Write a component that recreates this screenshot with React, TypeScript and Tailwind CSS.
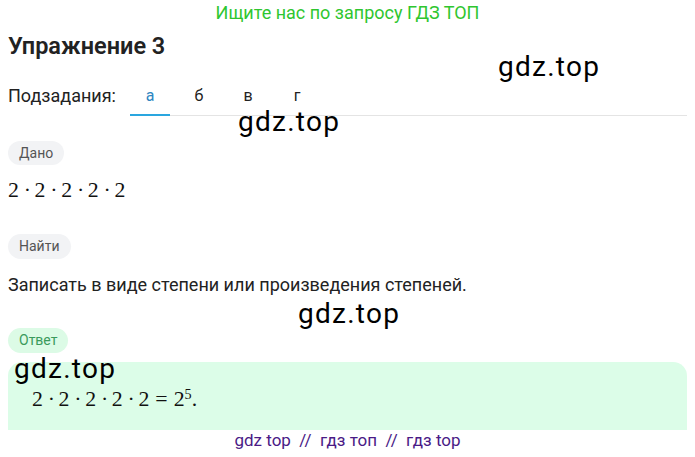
import React from "react";

const Dot = () => (
  <span className="inline-block w-[0.278em] mx-[0.222em] text-center">·</span>
);

const Two = () => <span className="inline-block w-[0.5em] text-center">2</span>;

function Product() {
  return (
    <>
      <Two />
      <Dot />
      <Two />
      <Dot />
      <Two />
      <Dot />
      <Two />
      <Dot />
      <Two />
    </>
  );
}

function Watermark({ className }: { className: string }) {
  return (
    <div
      className={`absolute text-[28px] leading-none text-black tracking-[0.045em] pointer-events-none ${className}`}
      style={{ fontFamily: "Roboto, sans-serif" }}
    >
      gdz.top
    </div>
  );
}

export default function App() {
  const tabs = ["а", "б", "в", "г"];
  return (
    <div
      className="relative w-[695px] h-[457px] overflow-hidden bg-white text-[#1f1f1f]"
      style={{ fontFamily: "Roboto, 'Noto Sans', sans-serif" }}
    >
      <div className="h-[24px] flex items-center justify-center text-[18px] text-[#2fc62f]">
        Ищите нас по запросу ГДЗ ТОП
      </div>

      <div className="px-2">
        <h1 className="mt-[7px] text-[23.5px] leading-[30px] font-semibold text-[#222]">
          Упражнение 3
        </h1>

        <div className="mt-[19px] flex items-end">
          <div className="w-[122px] text-[18px] leading-[24px] pb-[8px] text-[#222]">
            Подзадания:
          </div>
          <div className="flex-1 flex gap-[9px] border-b border-[#e4e4e4]">
            {tabs.map((t, i) => (
              <div
                key={t}
                className={`w-[40px] -mb-px text-center text-[16px] leading-[24px] pt-[4px] pb-[6px] border-b-2 ${
                  i === 0 ? "border-[#2aa6df] text-[#2e86c1]" : "border-transparent text-[#222]"
                }`}
              >
                {t}
              </div>
            ))}
          </div>
        </div>

        <div className="mt-[25px] inline-flex h-[24px] items-center rounded-full bg-[#f2f3f5] px-[11px] text-[14px] text-[#555]">
          Дано
        </div>

        <div
          className="mt-[11px] text-[21.8px] leading-[28px] text-[#111]"
          style={{ fontFamily: "'Liberation Serif', serif" }}
        >
          <Product />
        </div>

        <div className="mt-[30px] inline-flex h-[25px] items-center rounded-full bg-[#f2f3f5] px-[11px] text-[14px] text-[#555]">
          Найти
        </div>

        <p className="mt-[14px] text-[18px] leading-[24px] text-[#222]">
          Записать в виде степени или произведения степеней.
        </p>

        <div className="mt-[31px] inline-flex h-[25px] items-center rounded-full bg-[#dcfbe6] px-[11px] text-[14px] text-[#3a9a5c]">
          Ответ
        </div>

        <div className="mt-[9px] h-[68px] rounded-t-[14px] bg-[#dcfde8] flex items-center pl-[24px] pt-[8px]">
          <div
            className="text-[21.8px] leading-[28px] text-[#111]"
            style={{ fontFamily: "'Liberation Serif', serif" }}
          >
            <Product />
            <span className="inline-block mx-[0.278em]">=</span>
            <span>2</span>
            <span className="relative -top-[0.5em] text-[0.65em]">5</span>
            <span>.</span>
          </div>
        </div>

        <div className="h-[22px] flex items-center justify-center text-[17px] text-[#4a1a86]">
          gdz top &nbsp;//&nbsp; гдз топ &nbsp;//&nbsp; гдз top
        </div>
      </div>

      <Watermark className="left-[498px] top-[53px]" />
      <Watermark className="left-[238px] top-[108px]" />
      <Watermark className="left-[298px] top-[300px]" />
      <Watermark className="left-[14px] top-[355px]" />
    </div>
  );
}
